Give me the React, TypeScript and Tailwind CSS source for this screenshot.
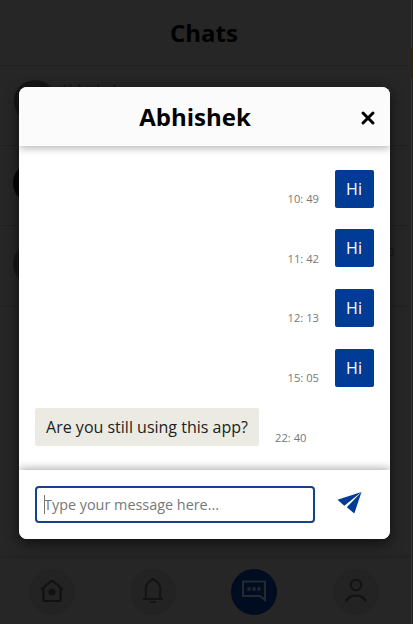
const messages = [
  { text: "Hi", time: "10: 49", mine: true },
  { text: "Hi", time: "11: 42", mine: true },
  { text: "Hi", time: "12: 13", mine: true },
  { text: "Hi", time: "15: 05", mine: true },
  { text: "Are you still using this app?", time: "22: 40", mine: false },
];

function Message({ text, time, mine }: { text: string; time: string; mine: boolean }) {
  return (
    <div className={mine ? "flex h-[38px] flex-row-reverse items-end gap-4" : "flex h-[38px] items-end gap-4"}>
      <div
        className={
          mine
            ? "flex h-[38px] w-[39px] items-center justify-center rounded-[2px] bg-[#003c95] pr-px text-base text-white"
            : "flex h-[38px] w-[224px] items-center justify-center whitespace-nowrap rounded-[2px] bg-[#ebebe3] text-base text-[#222]"
        }
      >
        {text}
      </div>
      <span
        className={
          mine
            ? "whitespace-nowrap pb-[0.6px] text-[11.2px] leading-[17px] text-[#777]"
            : "whitespace-nowrap text-[11.2px] leading-[17px] text-[#777]"
        }
      >
        {time}
      </span>
    </div>
  );
}

function Modal() {
  return (
    <section className="absolute left-[19px] top-[87px] flex h-[452px] w-[371px] flex-col overflow-hidden rounded-[8px] bg-white shadow-[0_4px_14px_rgba(0,0,0,0.6)]">
      <header className="relative z-10 flex h-[59px] shrink-0 items-center bg-[#fbfbfb] pl-[11px] pr-[14px] shadow-[0_2px_8px_rgba(0,0,0,0.3)]">
        <h2 className="flex-1 text-center text-2xl font-bold text-black">Abhishek</h2>
        <svg className="mt-[2px] h-4 w-4" viewBox="0 0 16 16" fill="none" stroke="#000" strokeWidth="3" strokeLinecap="round">
          <path d="M3 3L13 13M13 3L3 13" />
        </svg>
      </header>
      <div className="flex flex-1 flex-col gap-[21.7px] px-4 pt-[23.5px]">
        {messages.map((m) => (
          <Message key={m.time} {...m} />
        ))}
      </div>
      <footer className="relative z-10 flex h-[69px] shrink-0 items-center bg-white px-4 shadow-[0_-2px_8px_rgba(0,0,0,0.3)]">
        <div className="flex h-[37px] w-[280px] items-center rounded-[4px] border-2 border-[#15418f] pl-[7px]">
          <span className="h-[19px] w-px bg-[#777]" />
          <span className="-ml-px text-[14.4px] text-[#777]">Type your message here...</span>
        </div>
        <svg className="-mt-[3px] ml-[22px] h-[22px] w-[25px]" viewBox="0 0 25 22" fill="#003c95">
          <path d="M24.5 0L0.5 7.7L7.3 13.8Z" />
          <path d="M24.5 0L9.8 15.2L17.3 21.6Z" />
        </svg>
      </footer>
    </section>
  );
}

function Nav() {
  return (
    <nav className="absolute left-0 top-[558px] flex h-[66px] w-[411px] items-center bg-[#262626] pl-[29px] shadow-[0_-1px_4px_rgba(0,0,0,0.2)]">
      <div className="flex items-center gap-[55.2px] pt-[2px]">
        <div className="flex h-[46px] w-[46px] items-center justify-center rounded-full bg-[#232323]">
          <svg className="h-6 w-6" viewBox="0 0 24 24" fill="none" stroke="#121212" strokeWidth="2.1" strokeLinejoin="round">
            <path d="M1 9.5L12 0.5L23 9.5M3.5 8V21H20.5V8" />
            <circle cx="12" cy="12" r="3.5" fill="#121212" stroke="none" />
          </svg>
        </div>
        <div className="flex h-[46px] w-[46px] items-center justify-center rounded-full bg-[#232323]">
          <svg className="h-6 w-6 overflow-visible" viewBox="0 0 24 24" fill="none" stroke="#141414" strokeWidth="2.1">
            <path d="M2 19H22M4.800 19V8.500C4.800 4 8.500 1 12 -1C15.500 1 19.200 4 19.200 8.500V19M9 22H15" />
          </svg>
        </div>
        <div className="flex h-[46px] w-[46px] items-center justify-center rounded-full bg-[#000c20]">
          <svg className="h-6 w-6" viewBox="0 0 24 24" fill="none" stroke="#25282e" strokeWidth="2.1">
            <path d="M1 1.500H23V20L18 16H1Z" />
            <path d="M5.500 9H8.500M10.500 9H13.500M15.500 9H18.500" strokeWidth="3.3" />
          </svg>
        </div>
        <div className="flex h-[46px] w-[46px] items-center justify-center rounded-full bg-[#232323]">
          <svg className="h-6 w-6 overflow-visible" viewBox="0 0 24 24" fill="none" stroke="#141414" strokeWidth="2.1">
            <circle cx="12" cy="5" r="5.200" />
            <path d="M2 22C4.500 13.500 19.500 13.500 22 22" />
          </svg>
        </div>
      </div>
    </nav>
  );
}

export default function App() {
  return (
    <main className="relative h-[624px] w-[413px] overflow-hidden bg-[#262626] font-['Open_Sans',sans-serif]">
      <header className="flex h-[66px] w-[411px] items-center justify-center border-b border-[#212121] pr-[3px] text-2xl font-bold text-black">
        Chats
      </header>
      <div className="flex h-20 items-center border-b border-[#212121] pb-[10px] pl-[14px] text-sm text-[#151515]">
        <div className="flex items-start gap-1">
          <div className="h-[42px] w-[42px] rounded-full bg-[#151515]" />
          <span>Abhishek</span>
        </div>
      </div>
      <div className="flex h-20 items-center border-b border-[#212121] pb-[6px] pl-[13px]">
        <div className="h-[42px] w-[42px] rounded-full bg-[#060606]" />
      </div>
      <div className="flex h-[81px] items-center justify-between border-b border-[#212121] pb-1 pl-[13px] pr-[19px] text-[11px] text-[#111]">
        <div className="h-[42px] w-[42px] rounded-full bg-[#171717]" />
        <span className="mb-6">22: 40</span>
      </div>
      <Nav />
      <div className="absolute right-0 top-0 h-full w-[2px] border-l border-[#34343a] bg-[#242424]" />
      <div className="absolute right-0 top-[48px] h-[30px] w-[2px] bg-[#2b2500]" />
      <Modal />
    </main>
  );
}
